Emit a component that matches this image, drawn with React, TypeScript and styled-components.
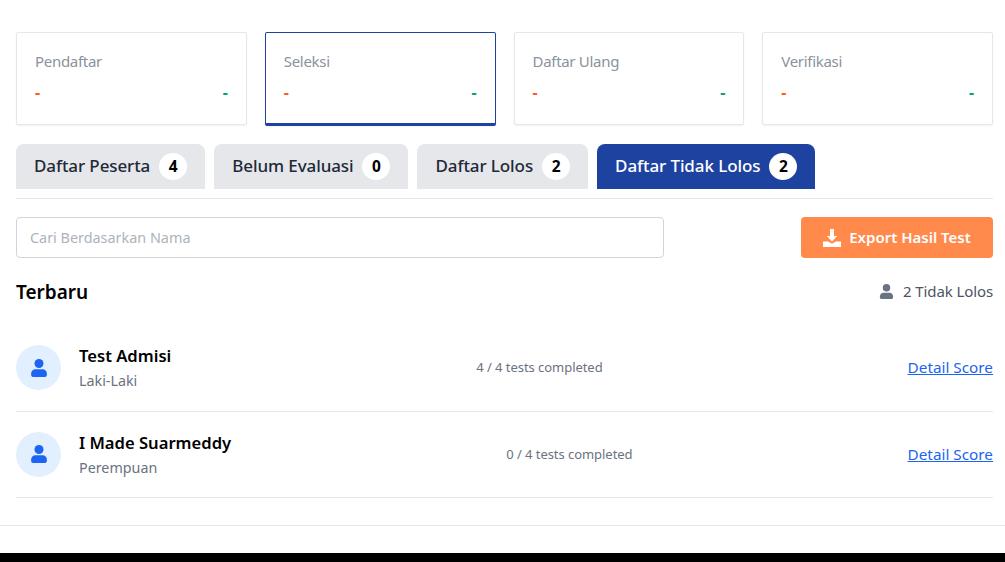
import React from 'react';
import styled, { createGlobalStyle } from 'styled-components';

const stats = ['Pendaftar', 'Seleksi', 'Daftar Ulang', 'Verifikasi'];

const tabs = [
    { label: 'Daftar Peserta', count: 4 },
    { label: 'Belum Evaluasi', count: 0 },
    { label: 'Daftar Lolos', count: 2 },
    { label: 'Daftar Tidak Lolos', count: 2 },
];

const people = [
    { name: 'Test Admisi', gender: 'Laki-Laki', done: 4 },
    { name: 'I Made Suarmeddy', gender: 'Perempuan', done: 0 },
];

const PersonIcon: React.FC<{ size: number }> = ({ size }) => (
    <svg width={size} height={size} viewBox="0 0 16 16" fill="currentColor">
        <circle cx="8" cy="4" r="4" />
        <path d="M4.8 9.2h6.4c2.1 0 3.8 1.7 3.8 3.8v1.3c0 .9-.7 1.7-1.6 1.7H2.600C1.700 16 1 15.200 1 14.300V13c0-2.100 1.700-3.800 3.800-3.800z" />
    </svg>
);

const DownloadIcon: React.FC = () => (
    <svg width="18" height="18" viewBox="0 0 18 18" fill="currentColor">
        <path d="M7 0h4v7h3.200L9 12.400 3.800 7H7z" />
        <path d="M0 12.500h5.200L9 14.800l3.800-2.300H18V18H0z" />
    </svg>
);

export default function App() {
    return (
        <Page>
            <GlobalStyle />
            <Content>
                <StatGrid>
                    {stats.map((stat) => (
                        <StatCard key={stat} $active={stat === 'Seleksi'}>
                            <StatLabel>{stat}</StatLabel>
                            <StatValues>
                                <StatValue $color="#ff5a1f">-</StatValue>
                                <StatValue $color="#0e9f6e">-</StatValue>
                            </StatValues>
                        </StatCard>
                    ))}
                </StatGrid>
                <TabBar>
                    {tabs.map((tab) => (
                        <Tab key={tab.label} $active={tab.label === 'Daftar Tidak Lolos'}>
                            <TabLabel>{tab.label}</TabLabel>
                            <TabCount>{tab.count}</TabCount>
                        </Tab>
                    ))}
                </TabBar>
                <Toolbar>
                    <SearchInput placeholder="Cari Berdasarkan Nama" />
                    <ExportButton>
                        <DownloadIcon />
                        <ExportLabel>Export Hasil Test</ExportLabel>
                    </ExportButton>
                </Toolbar>
                <ListHeader>
                    <ListTitle>Terbaru</ListTitle>
                    <ListSummary>
                        <PersonIcon size={15} />
                        2 Tidak Lolos
                    </ListSummary>
                </ListHeader>
                <List>
                    {people.map((person) => (
                        <Row key={person.name}>
                            <PersonInfo>
                                <Avatar>
                                    <PersonIcon size={18} />
                                </Avatar>
                                <PersonText>
                                    <PersonName>{person.name}</PersonName>
                                    <PersonGender>{person.gender}</PersonGender>
                                </PersonText>
                            </PersonInfo>
                            <Progress>{person.done} / 4 tests completed</Progress>
                            <DetailLink href="#">Detail Score</DetailLink>
                        </Row>
                    ))}
                </List>
            </Content>
            <FooterRule />
            <BlackBar />
        </Page>
    );
}

const GlobalStyle = createGlobalStyle`
    body {
        margin: 0;
        background: #fff;
        font-family: "Noto Sans", "Open Sans", sans-serif;
    }
`;

const Page = styled.div`
    height: 562px;
    overflow: hidden;
    display: flex;
    flex-direction: column;
`;

const Content = styled.div`
    padding: 32px 12px 0 16px;
`;

const StatGrid = styled.div`
    display: grid;
    grid-template-columns: repeat(4, 1fr);
    gap: 18px;
`;

const StatCard = styled.div<{ $active: boolean }>`
    box-sizing: border-box;
    height: ${(p) => (p.$active ? '94px' : '93px')};
    padding: 18px 18px 0;
    background: #fff;
    border: 1px solid ${(p) => (p.$active ? '#1e429f' : '#e5e7eb')};
    border-bottom-width: ${(p) => (p.$active ? '3px' : '1px')};
    border-radius: 2px;
    box-shadow: 0 1px 2px rgba(0, 0, 0, 0.05);
`;

const StatLabel = styled.div`
    font-size: 15px;
    line-height: 20px;
    letter-spacing: -0.3px;
    color: #8b929c;
`;

const StatValues = styled.div`
    display: flex;
    justify-content: space-between;
    margin-top: 11px;
`;

const StatValue = styled.span<{ $color: string }>`
    font-size: 16px;
    line-height: 20px;
    font-weight: 700;
    color: ${(p) => p.$color};
`;

const TabBar = styled.div`
    display: flex;
    gap: 9px;
    margin-top: 18px;
    padding-bottom: 9px;
    border-bottom: 1px solid #e5e7eb;
`;

const Tab = styled.button<{ $active: boolean }>`
    display: flex;
    align-items: center;
    gap: 9px;
    height: 45px;
    padding: 0 18px;
    border: 0;
    border-radius: 8px 8px 0 0;
    background: ${(p) => (p.$active ? '#1e429f' : '#e5e7eb')};
    color: ${(p) => (p.$active ? '#fff' : '#1f2937')};
    font-family: inherit;
    font-size: 17px;
    font-weight: 500;
`;

const TabLabel = styled.span`
    letter-spacing: -0.1px;
    margin-top: -2px;
`;

const TabCount = styled.span`
    display: flex;
    align-items: center;
    justify-content: center;
    width: 28px;
    height: 27px;
    border-radius: 50%;
    background: #fff;
    color: #000;
    font-size: 15.500px;
    font-weight: 700;
    padding-bottom: 1px;
    box-sizing: border-box;
`;

const Toolbar = styled.div`
    display: flex;
    justify-content: space-between;
    margin-top: 18px;
`;

const SearchInput = styled.input`
    box-sizing: border-box;
    width: 648px;
    height: 41px;
    padding: 0 13px;
    background: #fff;
    border: 1px solid #d1d5db;
    border-radius: 4px;
    font-family: inherit;
    font-size: 14.400px;

    &::placeholder {
        color: #adb3bc;
    }
`;

const ExportButton = styled.button`
    display: flex;
    align-items: center;
    justify-content: center;
    gap: 8px;
    width: 192px;
    height: 41px;
    border: 0;
    border-radius: 4px;
    background: #ff8a4c;
    color: #fff;
    font-family: inherit;
    font-size: 15px;
    font-weight: 600;
`;

const ExportLabel = styled.span`
    margin-top: -2px;
`;

const ListHeader = styled.div`
    display: flex;
    justify-content: space-between;
    align-items: center;
    margin-top: 20px;
    height: 28px;
`;

const ListTitle = styled.h2`
    margin: 0;
    font-size: 19px;
    font-weight: 600;
    color: #000;
`;

const ListSummary = styled.div`
    display: flex;
    align-items: center;
    gap: 9px;
    margin-top: -3px;
    font-size: 15px;
    letter-spacing: -0.1px;
    color: #4b5563;

    svg {
        color: #6b7280;
        margin-top: 2px;
    }
`;

const List = styled.div`
    margin-top: 19px;
`;

const Row = styled.div`
    box-sizing: border-box;
    display: flex;
    justify-content: space-between;
    align-items: center;
    height: 86.500px;
    border-bottom: 1px solid #e5e7eb;
`;

const PersonInfo = styled.div`
    display: flex;
    align-items: center;
    gap: 18px;
`;

const Avatar = styled.div`
    display: flex;
    align-items: center;
    justify-content: center;
    width: 45px;
    height: 45px;
    border-radius: 50%;
    background: #e1effe;
    color: #1c64f2;
`;

const PersonText = styled.div`
    padding-top: 2px;
`;

const PersonName = styled.div`
    font-size: 16.600px;
    line-height: 24px;
    font-weight: 600;
    color: #000;
`;

const PersonGender = styled.div`
    margin-top: 1px;
    font-size: 14.300px;
    line-height: 24px;
    color: #6b7280;
`;

const Progress = styled.div`
    font-size: 13px;
    letter-spacing: -0.05px;
    margin-top: -1px;
    color: #6b7280;
`;

const DetailLink = styled.a`
    font-size: 15.300px;
    margin-top: -1px;
    color: #1c64f2;
`;

const FooterRule = styled.hr`
    margin: 27px 0 0;
    border: 0;
    border-top: 1px solid #e5e7eb;
`;

const BlackBar = styled.div`
    margin-top: auto;
    height: 9px;
    background: #000;
`;
